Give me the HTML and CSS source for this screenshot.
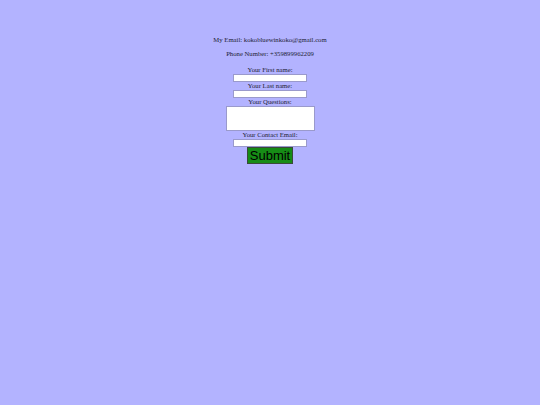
FILE: index.html
```html
<!DOCTYPE html>
<html>
<head>
<meta charset="utf-8">
<link rel="stylesheet" href="styles.css">
</head>
<body>
<div class="page">
  <p class="info">My Email: kokobluewinkoko@gmail.com</p>
  <p class="info">Phone Number: +359899962209</p>
  <form class="form">
    <label class="lbl">Your First name:</label>
    <input class="field" type="text">
    <label class="lbl">Your Last name:</label>
    <input class="field" type="text">
    <label class="lbl">Your Questions:</label>
    <textarea class="area"></textarea>
    <label class="lbl">Your Contact Email:</label>
    <input class="field" type="text">
    <button class="submit" type="button">Submit</button>
  </form>
</div>
</body>
</html>
```
FILE: styles.css
```css
html, body {
  margin: 0;
  padding: 0;
  background: #b3b3ff;
}
.page {
  display: flex;
  flex-direction: column;
  align-items: center;
  padding-top: 35px;
  font-family: "Liberation Serif", serif;
  font-size: 6.7px;
  color: #222233;
}
.info {
  margin: 0 0 5px 0;
  height: 9px;
  line-height: 9px;
}
.form {
  display: flex;
  flex-direction: column;
  align-items: center;
  margin-top: 3px;
}
.lbl {
  display: block;
  height: 8px;
  line-height: 8px;
}
.field {
  box-sizing: border-box;
  width: 74px;
  height: 8px;
  margin: 0;
  padding: 0;
  border: 1px solid #9a9acc;
  background: #fff;
}
.area {
  box-sizing: border-box;
  width: 89px;
  height: 25px;
  margin: 0;
  padding: 0;
  border: 1px solid #9a9acc;
  background: #fff;
  resize: none;
}
.submit {
  box-sizing: border-box;
  width: 46px;
  height: 17px;
  margin: 0;
  padding: 0;
  background: #168c16;
  border: 1px solid #3a4a3a;
  font-family: "Liberation Sans", sans-serif;
  font-size: 13px;
  line-height: 15px;
  color: #000;
}
```
